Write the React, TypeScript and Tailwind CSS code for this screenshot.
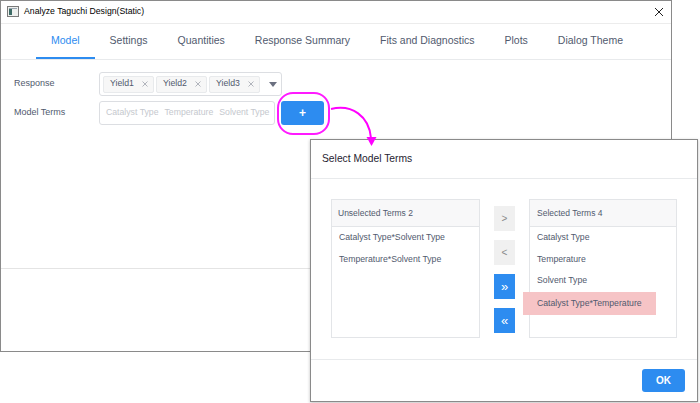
import React from 'react';

const tabs = ['Model', 'Settings', 'Quantities', 'Response Summary', 'Fits and Diagnostics', 'Plots', 'Dialog Theme'];
const responses = ['Yield1', 'Yield2', 'Yield3'];
const unselected = ['Catalyst Type*Solvent Type', 'Temperature*Solvent Type'];
const selected = ['Catalyst Type', 'Temperature', 'Solvent Type'];

const MoveButton: React.FC<{ label: string; primary?: boolean }> = ({ label, primary }) => (
  <div
    className={`w-[21px] h-[25px] flex items-center justify-center ${
      primary ? 'bg-[#2d8cf0] text-white text-[13px]' : 'bg-[#f0f0f0] text-[#8a8a8a] text-[10px]'
    }`}
  >
    {label}
  </div>
);

export default function App() {
  return (
    <div className="relative w-[700px] h-[403px] overflow-hidden bg-white font-['Liberation_Sans',Arial,sans-serif]">
      {/* main dialog window */}
      <div className="w-[672px] h-[352px] border border-[#8a8a8a] flex flex-col bg-white">
        <div className="h-[23px] flex items-center justify-between border-b border-[#ececec] pl-[6px] pr-[7px]">
          <div className="flex items-center gap-[5px]">
            <svg width="12" height="11" viewBox="0 0 12 11">
              <rect x="0.5" y="0.5" width="11" height="10" fill="#eef0ee" stroke="#7a7a7a" />
              <rect x="2" y="3" width="3" height="6" fill="#3d6b66" />
              <rect x="2" y="2" width="8" height="1" fill="#9aa6b0" />
            </svg>
            <span className="text-[8.7px] text-black">Analyze Taguchi Design(Static)</span>
          </div>
          <svg width="10" height="10" viewBox="0 0 10 10">
            <path d="M1 1 L9 9 M9 1 L1 9" stroke="#222" strokeWidth="1" />
          </svg>
        </div>

        <div className="h-[36px] flex items-stretch pl-[35px] border-b border-[#e8eaec]">
          {tabs.map((t, i) => (
            <div
              key={t}
              className={`px-[15px] flex items-center border-b-2 text-[10.5px] ${
                i === 0 ? 'border-[#2d8cf0] text-[#2d8cf0]' : 'border-transparent text-[#515a6e]'
              }`}
            >
              {t}
            </div>
          ))}
        </div>

        <div className="flex-1 pt-[12px] pl-[13px] flex flex-col gap-[5px]">
          <div className="flex items-center">
            <div className="w-[85px] text-[9px] text-[#515a6e]">Response</div>
            <div className="w-[183px] h-[24px] border border-[#dcdee2] rounded-[3px] flex items-center pl-[3px] gap-[2px]">
              {responses.map((r) => (
                <div
                  key={r}
                  className="w-[51px] h-[17px] border border-[#e8eaec] bg-[#f7f7f7] rounded-[2px] flex items-center justify-between pl-[6px] pr-[5px]"
                >
                  <span className="text-[8.7px] text-[#515a6e]">{r}</span>
                  <svg width="6" height="6" viewBox="0 0 6 6">
                    <path d="M0.5 0.5 L5.5 5.5 M5.5 0.5 L0.5 5.5" stroke="#a8acb4" strokeWidth="0.9" />
                  </svg>
                </div>
              ))}
              <svg width="8" height="5" viewBox="0 0 8 5" className="ml-[7px]">
                <path d="M0 0 L8 0 L4 5 Z" fill="#6b7080" />
              </svg>
            </div>
          </div>
          <div className="flex items-center">
            <div className="w-[85px] text-[9px] text-[#515a6e]">Model Terms</div>
            <div className="w-[176px] h-[24px] border border-[#dcdee2] rounded-[3px] flex items-center pl-[6px] gap-[6px] text-[8.7px] text-[#c5c8ce]">
              <span>Catalyst Type</span>
              <span>Temperature</span>
              <span>Solvent Type</span>
            </div>
            <div className="ml-[6px] w-[43px] h-[24px] rounded-[3px] bg-[#2d8cf0] flex items-center justify-center text-white text-[12px] font-bold">
              +
            </div>
          </div>
        </div>

        <div className="h-[83px] border-t border-[#e4e4e4]" />
      </div>

      {/* annotation highlight */}
      <div className="absolute left-[277px] top-[92px] w-[53px] h-[43px] border-2 border-[#ff1aff] rounded-[16px]" />

      {/* Select Model Terms popup */}
      <div className="absolute left-[310px] top-[139px] w-[388px] h-[263px] border border-[#8a8a8a] bg-white flex flex-col shadow-[0_1px_3px_rgba(0,0,0,0.25)]">
        <div className="h-[39px] border-b border-[#e8eaec] flex items-center pl-[11px] text-[10.3px] text-[#1f2330]">
          Select Model Terms
        </div>

        <div className="h-[180px] pt-[20px] pl-[20px] flex items-start">
          <div className="w-[149px] h-[139px] border border-[#e3e5e8] flex flex-col">
            <div className="h-[27px] bg-[#f8f8f9] border-b border-[#e3e5e8] flex items-center pl-[6px] text-[8.5px] text-[#515a6e]">
              Unselected Terms 2
            </div>
            {unselected.map((u) => (
              <div key={u} className="h-[21.6px] flex items-center pl-[7px] text-[8.7px] text-[#515a6e]">
                {u}
              </div>
            ))}
          </div>

          <div className="ml-[14px] mt-[7px] flex flex-col gap-[9px]">
            <MoveButton label=">" />
            <MoveButton label="<" />
            <MoveButton label="»" primary />
            <MoveButton label="«" primary />
          </div>

          <div className="ml-[14px] w-[148px] h-[139px] border border-[#e3e5e8] flex flex-col">
            <div className="h-[27px] bg-[#f8f8f9] border-b border-[#e3e5e8] flex items-center pl-[7px] text-[8.5px] text-[#515a6e]">
              Selected Terms 4
            </div>
            {selected.map((s) => (
              <div key={s} className="h-[21.6px] flex items-center pl-[7px] text-[8.7px] text-[#515a6e]">
                {s}
              </div>
            ))}
            <div className="-ml-[7px] w-[133px] h-[23.5px] bg-[#f6c4c6] flex items-center pl-[14px] text-[8.7px] text-[#515a6e]">
              Catalyst Type*Temperature
            </div>
          </div>
        </div>

        <div className="flex-1 border-t border-[#e8eaec] flex items-center justify-end pr-[12px]">
          <div className="w-[43px] h-[23px] rounded-[3px] bg-[#2d8cf0] flex items-center justify-center text-white text-[10px] font-bold">
            OK
          </div>
        </div>
      </div>

      {/* annotation arrow */}
      <svg className="absolute left-0 top-0 pointer-events-none" width="700" height="403" viewBox="0 0 700 403">
        <path d="M331 109 C 352 104 369 116 371 138" stroke="#ff00ff" strokeWidth="2" fill="none" />
        <path d="M366.5 137 L376.5 137 L371.5 146 Z" fill="#ff00ff" />
      </svg>
    </div>
  );
}
